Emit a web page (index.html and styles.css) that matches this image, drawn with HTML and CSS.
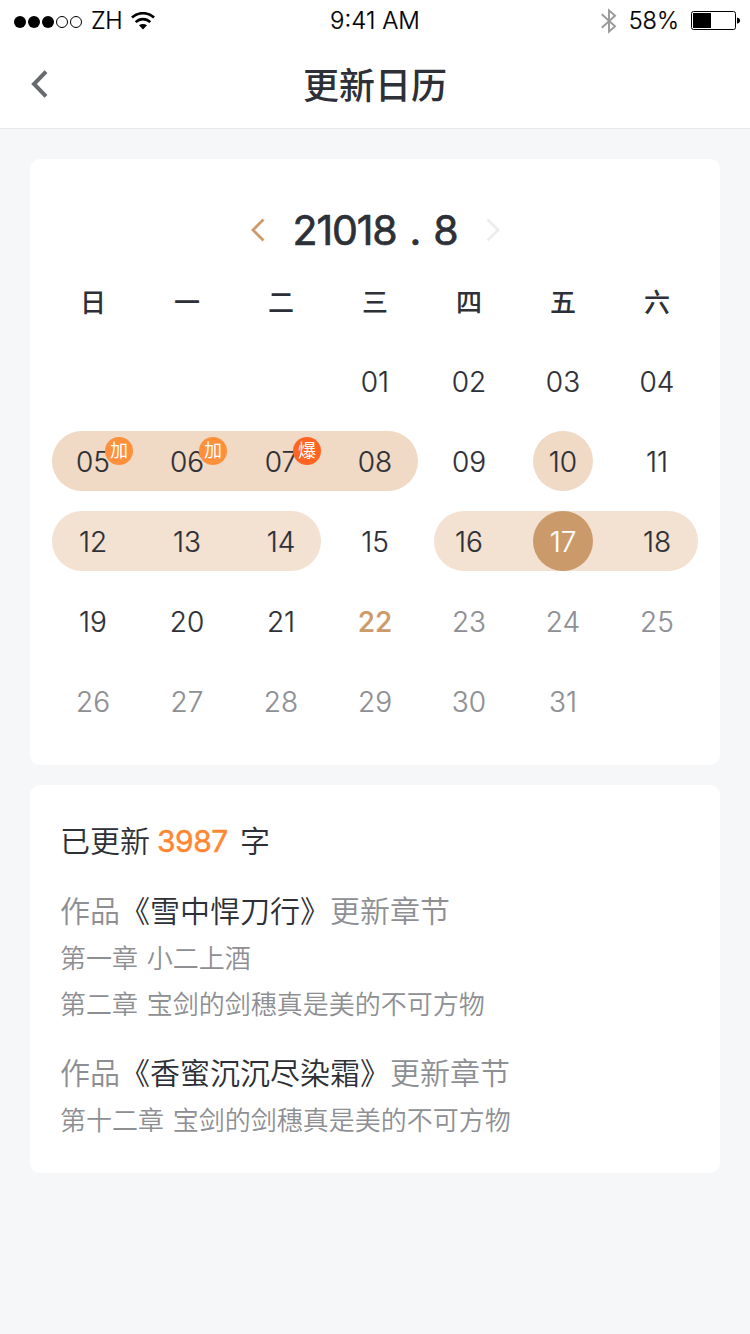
FILE: index.html
```html
<!DOCTYPE html>
<html lang="zh-CN">
<head>
<meta charset="utf-8">
<title>更新日历</title>
<link rel="stylesheet" href="styles.css">
</head>
<body>
<div class="statusbar">
  <div class="status-left">
    <svg class="signal" width="70" height="14" viewBox="0 0 70 14"><circle cx="7" cy="7" r="6"/><circle cx="21" cy="7" r="6"/><circle cx="35" cy="7" r="6"/><g fill="none" stroke="#000"><circle cx="49" cy="7" r="5.5"/><circle cx="63" cy="7" r="5.5"/></g></svg>
    <span class="carrier">ZH</span>
    <svg class="wifi" width="24" height="18" viewBox="0 0 24 18"><g fill="none" stroke="#000"><path stroke-width="2.7" d="M1 5.6C7.3-.3 16.7-.3 23 5.6"/><path stroke-width="2.6" d="M4.7 10.1C9 6.1 15 6.1 19.300 10.100"/></g><path d="M8 13.300C10.400 11.400 13.600 11.400 16 13.300L12 17.500Z"/></svg>
  </div>
  <span class="time">9:41 AM</span>
  <div class="status-right">
    <svg class="bluetooth" width="18" height="26" viewBox="0 0 18 26" fill="none" stroke="#999" stroke-width="1.900"><path d="M1.800 6.300L15 18.200L9 23.600V2.400L15 7.800L1.800 19.700"/></svg>
    <span class="percent">58%</span>
    <svg class="battery" width="50" height="20" viewBox="0 0 50 20"><rect x=".5" y=".5" width="44" height="18" rx="2" fill="none" stroke="#000"/><rect x="2" y="2" width="18" height="15"/><path d="M46 6.500Q49 7 49 9.500T46 12.500Z"/></svg>
  </div>
</div>
<header class="navbar">
  <svg class="back" width="18" height="28" viewBox="0 0 18 28"><path d="M16 1.700L4 14L16 26.300" fill="none" stroke="#676b6f" stroke-width="4"/></svg>
  <h1 class="title">更新日历</h1>
</header>
<main class="content">
  <section class="card calendar">
    <div class="month">
      <svg width="14" height="24" viewBox="0 0 14 24"><path d="M12.500 1.500L2 12L12.500 22.500" fill="none" stroke="#cd9b6b" stroke-width="2.800"/></svg>
      <span class="month-label"><span>21018</span><span>.</span><span>8</span></span>
      <svg width="14" height="24" viewBox="0 0 14 24"><path d="M1.500 1.500L12 12L1.500 22.500" fill="none" stroke="#ededed" stroke-width="2.800"/></svg>
    </div>
    <div class="weekdays"><span>日</span><span>一</span><span>二</span><span>三</span><span>四</span><span>五</span><span>六</span></div>
    <div class="week">
      <span class="day c4">01</span><span class="day c5">02</span><span class="day c6">03</span><span class="day c7">04</span>
    </div>
    <div class="week">
      <i class="range range-four"></i><i class="range spot"></i>
      <span class="day c1">05<b class="badge">加</b></span><span class="day c2">06<b class="badge">加</b></span><span class="day c3">07<b class="badge hot">爆</b></span><span class="day c4">08</span><span class="day c5">09</span><span class="day c6">10</span><span class="day c7">11</span>
    </div>
    <div class="week">
      <i class="range light range-three"></i><i class="range light range-end"></i><i class="range spot selected"></i>
      <span class="day c1">12</span><span class="day c2">13</span><span class="day c3">14</span><span class="day c4">15</span><span class="day c5">16</span><span class="day c6 on">17</span><span class="day c7">18</span>
    </div>
    <div class="week">
      <span class="day c1">19</span><span class="day c2">20</span><span class="day c3">21</span><span class="day c4 today">22</span><span class="day c5 off">23</span><span class="day c6 off">24</span><span class="day c7 off">25</span>
    </div>
    <div class="week">
      <span class="day c1 off">26</span><span class="day c2 off">27</span><span class="day c3 off">28</span><span class="day c4 off">29</span><span class="day c5 off">30</span><span class="day c6 off">31</span>
    </div>
  </section>
  <section class="card updates">
    <p class="total"><span>已更新</span><span class="count">3987</span><span>字</span></p>
    <div class="work">
      <p class="work-title">作品<span class="book">《雪中悍刀行》</span>更新章节</p>
      <p class="chapter">第一章 小二上酒</p>
      <p class="chapter">第二章 宝剑的剑穗真是美的不可方物</p>
    </div>
    <div class="work">
      <p class="work-title">作品<span class="book">《香蜜沉沉尽染霜》</span>更新章节</p>
      <p class="chapter">第十二章 宝剑的剑穗真是美的不可方物</p>
    </div>
  </section>
</main>
</body>
</html>
```
FILE: styles.css
```css
* { box-sizing: border-box; margin: 0; padding: 0; }
body {
  min-height: 1334px;
  background: #f5f7f9;
  color: #2d3036;
  font-family: Inter, "Noto Sans CJK SC", sans-serif;
}
svg { display: block; flex: none; }

.statusbar {
  display: grid;
  grid-template-columns: 1fr auto 1fr;
  align-items: center;
  height: 40px;
  padding: 0 9px 0 13px;
  background: #fff;
  color: #000;
  font-size: 23.5px;
  line-height: 38px;
  font-weight: 300;
  -webkit-text-stroke: 0.2px;
}
.status-left, .status-right { display: flex; align-items: center; }
.status-left { padding-top: 4px; }
.status-right { justify-content: flex-end; padding-top: 2px; }
.carrier { margin-left: 8px; margin-top: -2px; letter-spacing: -0.4px; }
.wifi { margin-left: 9px; margin-top: -2px; }
.time { padding-top: 2px; font-size: 24px; margin-right: 4px; }
.percent { margin: 0 12px 0 11px; }
.bluetooth { margin-top: -1px; }

.navbar {
  display: grid;
  grid-template-columns: 60px 1fr 60px;
  align-items: center;
  height: 89px;
  background: #fff;
  border-bottom: 1px solid #e6e8ec;
}
.back { margin-left: 30px; }
.title { padding-top: 4px; text-align: center; font-size: 36px; line-height: 52px; font-weight: 500; }

.content { display: flex; flex-direction: column; gap: 20px; padding: 30px; }
.card { background: #fff; border-radius: 10px; }

.calendar { height: 606px; padding: 40px 16px 24px; }
.month { display: flex; justify-content: center; align-items: center; gap: 28px; height: 61px; }
.month-label {
  display: flex;
  justify-content: space-between;
  width: 165px;
  font-size: 41px;
  font-weight: 400;
  -webkit-text-stroke: 0.7px;
  letter-spacing: -1.1px;
  line-height: 60px;
}
.weekdays, .week { display: grid; grid-template-columns: repeat(7, 94px); }
.weekdays { height: 81px; padding-bottom: 1px; align-items: center; text-align: center; font-size: 26px; font-weight: 500; }
.week { grid-template-rows: 60px; padding: 10px 0; }
.day {
  position: relative;
  grid-row: 1;
  text-align: center;
  font-size: 28px;
  line-height: 62px;
  font-weight: 300;
  -webkit-text-stroke: 0.2px;
}
.c1 { grid-column: 1; }
.c2 { grid-column: 2; }
.c3 { grid-column: 3; }
.c4 { grid-column: 4; }
.c5 { grid-column: 5; }
.c6 { grid-column: 6; }
.c7 { grid-column: 7; }
.off { color: #8e8f93; }
.on { color: #fff; }
.today { color: #cd9b6b; font-weight: 500; }

.range { grid-row: 1; border-radius: 30px; background: #f0d9c5; }
.range-four { grid-column: 1 / 5; margin: 0 4px 0 6px; }
.range-three { grid-column: 1 / 4; margin: 0 7px 0 6px; }
.range-end { grid-column: 5 / 8; margin: 0 6px 0 12px; }
.spot { grid-column: 6; margin: 0 17px; }
.light { background: #f3e1d1; }
.selected { background: #cb9a6a; }

.badge {
  position: absolute;
  left: 59px;
  top: 6px;
  width: 28px;
  height: 28px;
  border-radius: 50%;
  background: #ff903b;
  color: #fff;
  font-size: 18px;
  line-height: 28px;
  font-weight: 400;
  -webkit-text-stroke: 0;
}
.hot { background: #ff6422; }

.updates { height: 388px; padding: 33px 30px; }
.total { display: flex; font-size: 30px; line-height: 46px; font-weight: 350; }
.count { width: 71px; margin: 0 12px 0 7px; color: #ff8730; font-weight: 400; -webkit-text-stroke: 0.5px; letter-spacing: -0.5px; }
.work { margin-top: 21px; color: #8e8f93; font-weight: 350; }
.total + .work { margin-top: 23px; }
.work-title { font-size: 30px; line-height: 48px; }
.chapter { font-size: 26px; line-height: 46px; word-spacing: 1.5px; }
.work-title + .chapter { padding-top: 1px; }
.book { color: #2d3036; }
```
